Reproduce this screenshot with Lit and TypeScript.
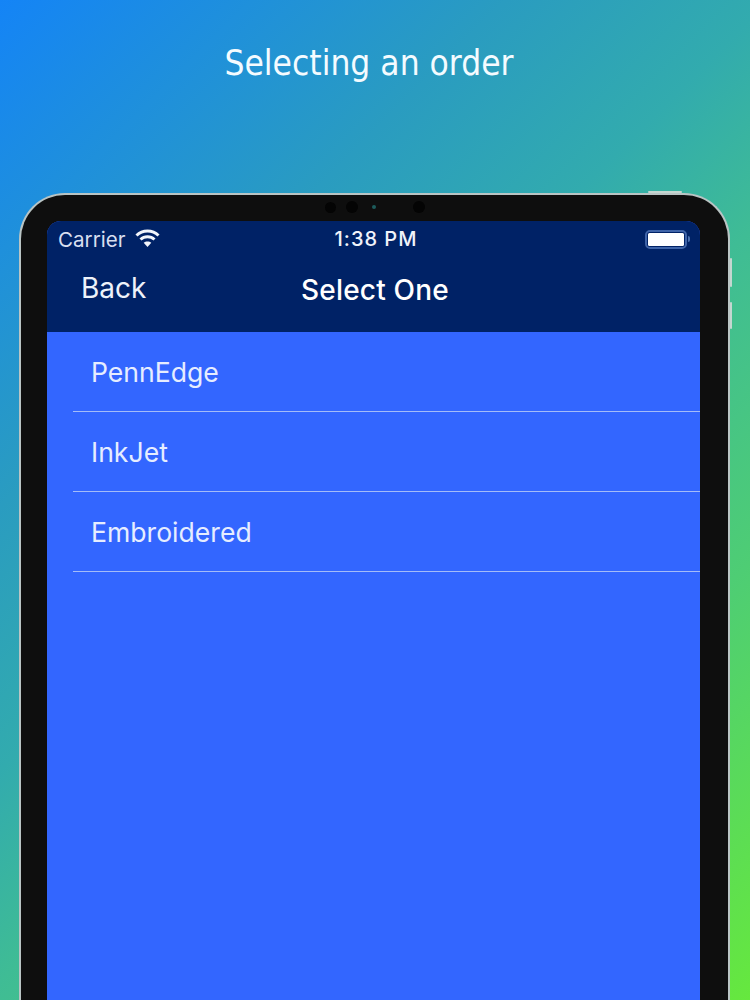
import { LitElement, html, css } from "lit";
import { customElement } from "lit/decorators.js";

@customElement("app-root")
export class AppRoot extends LitElement {
  static styles = css`
    :host { display: block; width: 750px; height: 1000px; overflow: hidden; }
    .page {
      width: 750px; height: 1000px; overflow: hidden; box-sizing: border-box;
      background: linear-gradient(135deg, #1484f6 0%, #2a9cc0 29%, #32abae 44%, #3fbc95 56%, #4ecd74 75%, #66e83e 100%);
      display: flex; flex-direction: column; align-items: center;
    }
    .headline {
      height: 193px; flex: none; box-sizing: border-box; padding-top: 41px; margin-right: 12px;
      font: 35px/44px "DejaVu Sans Condensed", "DejaVu Sans", sans-serif;
      font-stretch: condensed; color: #f4fbff;
    }
    .device {
      position: relative; flex: none; width: 711px; height: 900px; margin-left: -1px; box-sizing: border-box;
      background: #0e0e0e; border: 2px solid #b9c4c4; border-bottom: 0;
      border-radius: 46px 46px 0 0; padding: 26px 28px 0 26px;
    }
    .btn { position: absolute; background: #c4d6d0; border-radius: 1px; }
    .btn.top { top: -4px; right: 46px; width: 34px; height: 2px; }
    .btn.v1 { top: 63px; right: -4px; width: 2px; height: 29px; }
    .btn.v2 { top: 107px; right: -4px; width: 2px; height: 27px; }
    .cams { position: absolute; top: 6px; left: 304px; display: flex; align-items: center; }
    .cam { width: 11px; height: 11px; border-radius: 50%; background: #040404; }
    .cam.a { margin-right: 9.5px; }
    .cam.b { width: 12px; height: 12px; margin-right: 14px; }
    .cam.c { width: 4px; height: 4px; background: #1d5b5b; margin-right: 37px; }
    .cam.d { width: 12px; height: 12px; }
    .screen {
      height: 100%; background: #3366ff; border-radius: 14px 14px 0 0; overflow: hidden;
      display: flex; flex-direction: column; font-family: Inter, "Liberation Sans", sans-serif; color: #eef3ff;
    }
    .bar { height: 111px; flex: none; background: #002266; display: flex; flex-direction: column; }
    .status {
      height: 36px; display: grid; grid-template-columns: 1fr auto 1fr; align-items: center;
      padding: 0 10px 0 11px;
    }
    .left { display: flex; align-items: center; gap: 9px; color: #d8dff0; }
    .carrier { font-size: 20.6px; }
    .wifi { display: block; margin-top: -3px; }
    .time { font-size: 20px; font-weight: 500; color: #f0f3fa; letter-spacing: 1px; margin-left: 4px; }
    .right { display: flex; justify-content: flex-end; }
    .battery { display: flex; align-items: center; gap: 1px; }
    .cell { width: 42px; height: 19px; box-sizing: border-box; padding: 1px; border: 2px solid #3f64a8; border-radius: 5px; }
    .cell i { display: block; height: 100%; background: #fff; border-radius: 1.5px; }
    .nub { width: 2px; height: 6px; background: #4a70b0; border-radius: 0 2px 2px 0; }
    .nav { flex: 1; display: grid; grid-template-columns: 1fr auto 1fr; align-items: center; padding: 0 31px 12px 34px; }
    .back { font-size: 28px; color: #eef2fa; margin-top: -1px; }
    .title { font-size: 28px; font-weight: 500; color: #fff; letter-spacing: 0.2px; margin-top: 3px; }
    .list { flex: 1; padding-left: 26px; }
    .row {
      height: 80px; box-sizing: border-box; padding: 1px 0 0 18px; border-bottom: 1px solid #a4bcf8;
      display: flex; align-items: center; font-size: 26.6px; color: #e6edff;
    }
  `;

  render() {
    return html`
      <div class="page">
        <div class="headline">Selecting an order</div>
        <div class="device">
          <span class="btn top"></span><span class="btn v1"></span><span class="btn v2"></span>
          <div class="cams"><span class="cam a"></span><span class="cam b"></span><span class="cam c"></span><span class="cam d"></span></div>
          <div class="screen">
            <div class="bar">
              <div class="status">
                <div class="left">
                  <span class="carrier">Carrier</span>
                  <svg class="wifi" width="25" height="18" viewBox="0 0 25 18" fill="none" stroke="#f2f5fb" stroke-width="3">
                    <path d="M1.5 6.5 C7.5 0.5 17.5 0.5 23.5 6.5" />
                    <path d="M5.5 10.5 C9.5 6.7 15.5 6.7 19.5 10.5" />
                    <path d="M12.5 18 L8.7 13.8 C10.7 12 14.3 12 16.3 13.8 Z" fill="#f2f5fb" stroke="none" />
                  </svg>
                </div>
                <div class="time">1:38 PM</div>
                <div class="right">
                  <div class="battery"><div class="cell"><i></i></div><span class="nub"></span></div>
                </div>
              </div>
              <div class="nav">
                <span class="back">Back</span>
                <span class="title">Select One</span>
                <span></span>
              </div>
            </div>
            <div class="list">
              <div class="row">PennEdge</div>
              <div class="row">InkJet</div>
              <div class="row">Embroidered</div>
            </div>
          </div>
        </div>
      </div>
    `;
  }
}
